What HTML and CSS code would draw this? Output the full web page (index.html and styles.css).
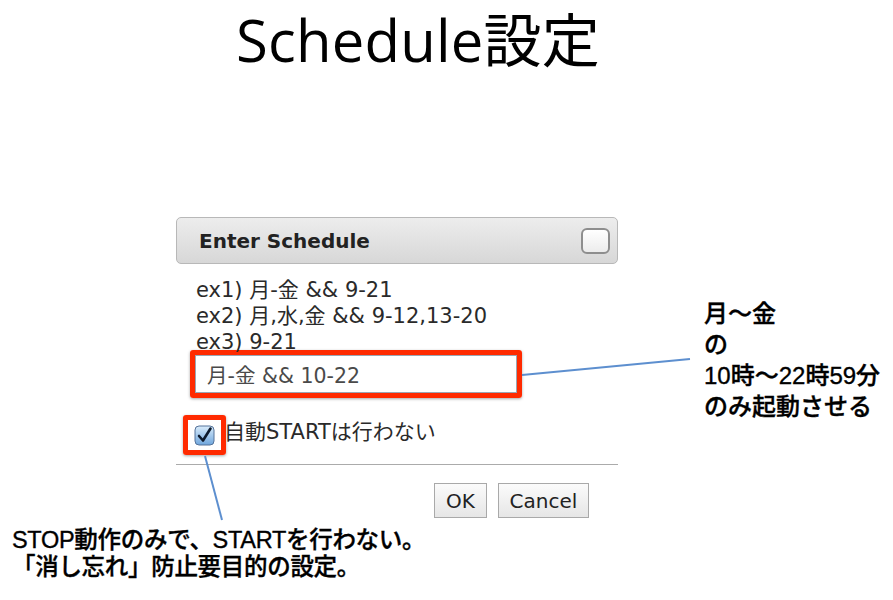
FILE: index.html
```html
<!DOCTYPE html>
<html lang="ja">
<head>
<meta charset="utf-8">
<title>Schedule設定</title>
<link rel="stylesheet" href="styles.css">
</head>
<body>
<div class="page">
  <h1 class="title">Schedule設定</h1>

  <div class="dialog">
    <div class="dlg-header">
      <span class="dlg-title">Enter Schedule</span>
      <span class="dlg-close"></span>
    </div>
    <div class="dlg-body">
      <div class="examples">
        <div>ex1) 月-金 &amp;&amp; 9-21</div>
        <div>ex2) 月,水,金 &amp;&amp; 9-12,13-20</div>
        <div>ex3) 9-21</div>
      </div>
      <div class="hl hl-input">
        <div class="input">月-金 &amp;&amp; 10-22</div>
      </div>
      <div class="check-row">
        <div class="hl hl-check">
          <span class="checkbox">
            <svg width="21" height="21" viewBox="0 0 21 21">
              <defs>
                <linearGradient id="cbg" x1="0" y1="0" x2="0" y2="1">
                  <stop offset="0" stop-color="#d9ecfb"/>
                  <stop offset="1" stop-color="#6fa6dd"/>
                </linearGradient>
              </defs>
              <rect x="1" y="1" width="19" height="19" rx="4" fill="url(#cbg)" stroke="#55739a" stroke-width="1"/>
              <path d="M5 11 L9 15.5 L16.5 3.5" fill="none" stroke="#0d1a2c" stroke-width="2.6" stroke-linecap="round" stroke-linejoin="round"/>
            </svg>
          </span>
        </div>
        <span class="check-label">自動STARTは行わない</span>
      </div>
    </div>
    <div class="dlg-footer">
      <button class="btn btn-ok">OK</button>
      <button class="btn btn-cancel">Cancel</button>
    </div>
  </div>

  <div class="note note-right">
    <div class="nr-line">月〜金</div>
    <div class="nr-line">の</div>
    <div class="nr-line">10時〜22時59分</div>
    <div class="nr-line">のみ起動させる</div>
  </div>
  <div class="note note-bottom">
    <div class="nb-line">STOP動作のみで、STARTを行わない。</div>
    <div class="nb-line">「消し忘れ」防止要目的の設定。</div>
  </div>

  <svg class="connectors" width="893" height="600" viewBox="0 0 893 600">
    <line x1="522" y1="375" x2="690" y2="359" stroke="#5d8fcf" stroke-width="2"/>
    <line x1="205" y1="456" x2="222" y2="520" stroke="#5d8fcf" stroke-width="2"/>
  </svg>
</div>
</body>
</html>
```

FILE: styles.css
```css
html, body {
  margin: 0;
  padding: 0;
  background: #ffffff;
}

.page {
  position: relative;
  width: 893px;
  height: 600px;
  overflow: hidden;
  display: flex;
  flex-direction: column;
}

.title {
  margin: 0;
  padding-left: 236px;
  height: 80px;
  line-height: 80px;
  font-family: "Open Sans", "Noto Sans CJK JP", sans-serif;
  font-weight: 400;
  font-size: 58px;
  color: #000;
  letter-spacing: 0.2px;
}

.dialog {
  margin-top: 137px;
  margin-left: 176px;
  width: 442px;
  font-family: "DejaVu Sans", "Noto Sans CJK JP", sans-serif;
}

.dlg-header {
  box-sizing: border-box;
  height: 47px;
  border: 1px solid #b8b8b8;
  border-radius: 5px;
  background: linear-gradient(#ededed, #d7d7d7);
  display: flex;
  align-items: center;
  justify-content: space-between;
  padding: 0 7px 0 22px;
}

.dlg-title {
  font-weight: bold;
  font-size: 20px;
  color: #222;
}

.dlg-close {
  box-sizing: border-box;
  width: 29px;
  height: 26px;
  border: 2px solid #8e8e8e;
  border-radius: 6px;
  background: linear-gradient(#ffffff, #ececec);
}

.dlg-body {
  padding: 13px 0 9px 0;
  border-bottom: 1px solid #ababab;
}

.examples {
  padding-left: 20px;
  font-size: 21px;
  line-height: 26px;
  color: #2a2a2a;
  height: 73px;
}

.hl {
  box-sizing: border-box;
  border: 5px solid #ff2a00;
  border-radius: 3px;
  box-shadow: 0 1px 3px rgba(0, 0, 0, 0.35);
}

.hl-input {
  margin-left: 14px;
  width: 332px;
  height: 48px;
}

.input {
  box-sizing: border-box;
  height: 100%;
  border: 1px solid #9aa6b4;
  background: #fff;
  padding-left: 11px;
  display: flex;
  align-items: center;
  font-size: 20.5px;
  color: #4a4a4a;
}

.check-row {
  margin-top: 17px;
  margin-left: 7px;
  display: flex;
  align-items: center;
}

.hl-check {
  width: 43px;
  height: 40px;
  display: flex;
  align-items: center;
  justify-content: center;
}

.checkbox {
  display: block;
  width: 21px;
  height: 21px;
}

.checkbox svg {
  display: block;
}

.check-label {
  margin-left: -2px;
  margin-top: -11px;
  font-size: 21px;
  color: #2a2a2a;
}

.dlg-footer {
  display: flex;
  justify-content: flex-end;
  gap: 11px;
  padding: 18px 29px 0 0;
}

.btn {
  box-sizing: border-box;
  height: 35px;
  border: 1px solid #a9a9a9;
  background: linear-gradient(#fbfbfb, #e6e6e6);
  font-family: "DejaVu Sans", sans-serif;
  font-size: 20px;
  color: #222;
  padding: 0;
}

.btn-ok {
  width: 53px;
}

.btn-cancel {
  width: 91px;
}

.note {
  position: absolute;
  font-family: "Liberation Sans", "Noto Sans CJK JP", sans-serif;
  font-weight: 500;
  color: #000;
  white-space: nowrap;
  -webkit-text-stroke: 0.35px #000;
}

.note-right {
  left: 704px;
  top: 298px;
  font-size: 24px;
}

.nr-line {
  height: 31px;
  line-height: 31px;
}

.note-bottom {
  left: 12px;
  top: 527px;
  font-size: 23.5px;
  letter-spacing: -0.3px;
}

.nb-line {
  height: 27px;
  line-height: 27px;
}

.connectors {
  position: absolute;
  left: 0;
  top: 0;
  pointer-events: none;
}
```
